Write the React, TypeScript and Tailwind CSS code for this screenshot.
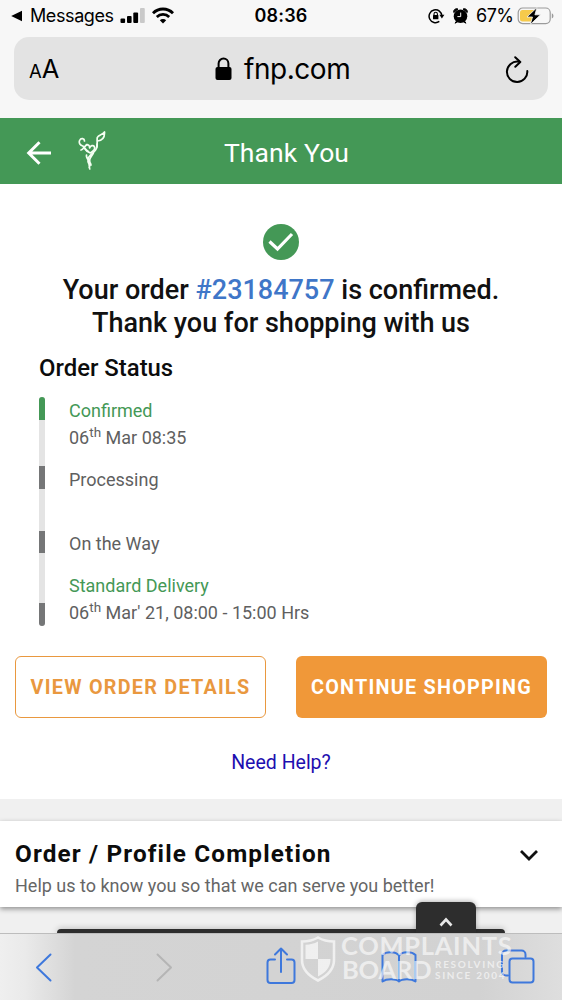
import React from "react";

function StatusBar() {
  return (
    <div className="flex h-[37px] items-center pr-[7px] pb-[6px] pl-[10px] font-['Inter','Liberation_Sans',sans-serif] text-black">
      <div className="flex w-[200px] items-center">
        <svg width="13" height="12" viewBox="0 0 13 12" className="mr-[7px]">
          <path d="M1.2 6 12 .8v10.4z" />
        </svg>
        <span className="w-[85px] text-[18px] leading-[30px] whitespace-nowrap tracking-[-0.4px]">Messages</span>
        <svg width="26" height="16" viewBox="0 0 26 16" className="ml-[5px]">
          <rect x="0.5" y="10.5" width="4.6" height="4.5" rx="1" />
          <rect x="7" y="8" width="4.6" height="7" rx="1" />
          <rect x="13.3" y="4.5" width="4.8" height="10.5" rx="1" />
          <rect x="20" y="0" width="4.8" height="15" rx="1" fill="#c9c9c9" />
        </svg>
        <svg width="22" height="17" viewBox="0 0 22 17" className="ml-[6px] shrink-0" fill="none" stroke="#000" strokeWidth="2.8">
          <path d="M1 6.2a14 14 0 0 1 20 0" />
          <path d="M4.8 10a8.8 8.8 0 0 1 12.4 0" />
          <path d="M11 16.6 7.8 13.2a4.6 4.6 0 0 1 6.4 0z" fill="#000" stroke="none" />
        </svg>
      </div>
      <div className="w-[142px] text-center text-[18px] leading-[30px] font-semibold tracking-[0.2px]">08:36</div>
      <div className="flex w-[203px] items-center justify-end">
        <svg width="17" height="16" viewBox="0 0 17 16" fill="none" stroke="#000" strokeWidth="1.5">
          <path d="M11.3 13.4A6.4 6.4 0 1 1 13.9 8" />
          <path d="M11.4 6.8h5l-2.5 3.6z" fill="#000" stroke="none" />
          <rect x="5" y="7" width="5.4" height="4.3" rx=".5" fill="#000" stroke="none" />
          <path d="M6 7.4V6a1.7 1.7 0 0 1 3.400 0v1.4" strokeWidth="1.1" />
        </svg>
        <svg width="15" height="16" viewBox="0 0 15 16" className="ml-[8px]">
          <circle cx="7.5" cy="8.3" r="6.8" />
          <path d="M.8 4.600A3 3 0 0 1 5 1L.8 4.600zM14.200 4.600A3 3 0 0 0 10 1l4.200 3.600zM2 15.200l2.200-3 1.300 1zM13 15.200l-2.200-3-1.300 1z" stroke="#000" strokeWidth="1" />
          <path d="M7.700 4.600v4H4.400" fill="none" stroke="#f7f7f7" strokeWidth="1" />
        </svg>
        <span className="ml-[8px] w-[39px] text-[18px] leading-[30px] tracking-[-0.5px] whitespace-nowrap">67%</span>
        <svg width="38" height="18" viewBox="0 0 38 18" className="ml-[2px] shrink-0">
          <rect x="1.2" y="1" width="32" height="15.6" rx="4.500" fill="none" stroke="#9b9b9b" strokeWidth="1.2" />
          <path d="M5.500 3H17v11.600H5.500A2.500 2.500 0 0 1 3 12.100V5.500A2.500 2.500 0 0 1 5.500 3z" fill="#f6ca4b" />
          <path d="M34.800 6.200a3 3 0 0 1 0 5.400z" fill="#9b9b9b" />
          <path d="M20 .5 10 10h5.500l-2.200 7.500L23.500 7.800h-5.600z" stroke="#f7f7f7" strokeWidth=".8" />
        </svg>
      </div>
    </div>
  );
}

function AddressBar() {
  return (
    <div className="mx-[14px] flex h-[63px] items-center rounded-[15px] bg-[#e3e3e3] font-['Inter','Liberation_Sans',sans-serif] text-black">
      <div className="flex w-[180px] items-baseline pt-[2px] pl-[15px] leading-[30px]">
        <span className="text-[18.500px]">A</span>
        <span className="text-[25.500px] tracking-[-0.500px]">A</span>
      </div>
      <div className="flex grow items-center pl-[21px]">
        <svg width="17" height="24" viewBox="0 0 17 24">
          <rect x=".5" y="10" width="16" height="13" rx="2" />
          <path d="M3.600 11V6.500a4.900 4.900 0 0 1 9.800 0V11" fill="none" stroke="#000" strokeWidth="2" />
        </svg>
        <span className="ml-[12px] pt-px text-[28px] leading-[36px] tracking-[-0.450px]">fnp.com</span>
      </div>
      <svg width="24" height="28" viewBox="0 0 24 28" className="mt-[2px] mr-[19px]" fill="none" stroke="#000" strokeWidth="2" strokeLinecap="round" strokeLinejoin="round">
        <path d="M13.500 5.700A10.200 10.200 0 1 0 22.300 15" />
        <path d="M10.200 1.200 15.300 6l-5 4.800" />
      </svg>
    </div>
  );
}

function GreenHeader() {
  return (
    <div className="flex h-[66px] items-center bg-[#449856] text-white">
      <div className="flex w-[180px] items-center pl-[26px]">
        <svg width="26" height="26" viewBox="0 0 26 26" className="mt-[3px]" fill="none" stroke="#fff" strokeWidth="3">
          <path d="M25 13H3M13.500 2.200 2.700 13l10.800 10.800" />
        </svg>
        <svg width="28" height="40" viewBox="0 0 28 40" className="ml-[26px]" fill="none" stroke="#f4fff2" strokeWidth="1.700" strokeLinecap="round" strokeLinejoin="round">
          <path d="M6.500 10C6.500 7.500 3 6.500 1.600 9.500c-1 2.500.6 5 3.200 5.500 2 1.500 2.500 4 5 5M3 19c2.500-.5 3.500-4 6-5.500" />
          <path d="M9 14c1.800-.5 2.600 1 2.600 2.800 1-2.300 3.600-3 4.700-1.300 1.200 2-.8 4.500-4 6.500C9.500 21 7.500 19 6.300 17" />
          <path d="M19 16c.5-4-.2-7.500.3-9.500C20.500 3.500 24.500 4 26.500 1c.3 5-2 8.500-7 9" />
          <path d="M19 13c.5 5.500-3 8-6.500 11-3.200 3-3.200 6-1.500 9l.7 5M16 20.500c-1 3.500-3.500 5-4.300 8-.5 3 1.800 4.500-.5 8M8.500 24c-1 4 4 6 4.500 10" />
        </svg>
      </div>
      <h1 className="w-[213px] pt-[3px] text-center text-[26.500px] leading-[34px] font-normal tracking-[0.100px]">Thank You</h1>
    </div>
  );
}

const steps = [
  { title: "Confirmed", day: "06", rest: " Mar 08:35", done: true, size: "h-[69px]" },
  { title: "Processing", done: false, size: "h-[64px]" },
  { title: "On the Way", done: false, size: "h-[42px]" },
];

function When({ day, rest }: { day: string; rest: string }) {
  return (
    <div className="whitespace-pre">
      {day}
      <sup className="top-[-0.550em] text-[13.500px]">th</sup>
      {rest}
    </div>
  );
}

function OrderStatus() {
  return (
    <div className="mt-[12px] flex pl-[39px]">
      <div className="flex h-[229px] w-[6px] flex-col overflow-hidden rounded-[3px] bg-[#e4e4e4]">
        <div className="h-[23px] bg-[#449856]" />
        <div className="mt-[46px] h-[23px] bg-[#757677]" />
        <div className="mt-[42px] h-[22px] bg-[#757677]" />
        <div className="mt-[50px] h-[23px] bg-[#757677]" />
      </div>
      <div className="ml-[24px] text-[18px] leading-[27px] text-[#5f5f5f]">
        {steps.map((s) => (
          <div key={s.title} className={s.size}>
            <div className={s.done ? "text-[#449856]" : ""}>{s.title}</div>
            {s.day && <When day={s.day} rest={s.rest} />}
          </div>
        ))}
        <div className="text-[#449856]">Standard Delivery</div>
        <When day="06" rest=" Mar' 21, 08:00 - 15:00 Hrs" />
      </div>
    </div>
  );
}

function Watermark() {
  return (
    <div className="absolute top-[2px] left-[300px] flex font-['Lato','Open_Sans',sans-serif] font-bold text-white/60">
      <svg width="36" height="46" viewBox="0 0 36 46" className="shrink-0">
        <path d="M18 1.500C23 4.500 28 5.500 34 5.500V24c0 10-7 16-16 20.500C9 40 2 34 2 24V5.500c6 0 11-1 16-4z" fill="none" stroke="#fff" strokeOpacity=".65" strokeWidth="2.600" />
        <path d="M18 5.500V23H5.500V8.700c5-.2 8.500-1 12.500-3.200zM18 23h12.500c0 9-5.500 14-12.500 17.500z" fill="#fff" fillOpacity=".65" />
      </svg>
      <div className="ml-[5px]">
        <div className="h-[22px] text-[25.500px] leading-[19px] tracking-[0.700px]">COMPLAINTS</div>
        <div className="flex">
          <span className="w-[94px] pl-px text-[25.500px] leading-[23px] tracking-[-0.200px]">BOARD</span>
          <span className="pt-px text-[10px] leading-[10.500px] tracking-[1.700px] whitespace-nowrap">
            RESOLVING
            <br />
            SINCE 2004
          </span>
        </div>
      </div>
    </div>
  );
}

function Toolbar() {
  return (
    <div className="relative h-[67px] border-t border-[#bdbdbd] bg-[linear-gradient(to_right,#efefef_0px,#eaeaea_25px,#d4d4d4_75px,#d2d2d2_480px,#dedede_562px)]">
      <svg width="562" height="66" viewBox="0 0 562 66" fill="none" stroke="#3e78dc" strokeWidth="2" strokeLinecap="round" strokeLinejoin="round">
        <path d="M50.500 20.500 37 33.500l13.500 13" />
        <path d="M157.500 20.500 171 33.500l-13.500 13" stroke="#b5b5b5" />
        <path d="M275 25.500h-4.500a3 3 0 0 0-3 3V46a3 3 0 0 0 3 3h21a3 3 0 0 0 3-3V28.500a3 3 0 0 0-3-3H287M281 38V14.500M275 20.500l6-6 6 6" />
        <path d="M399 21.500c-3-4-12.500-4.500-16.500-.5v26.500c4-3 13.500-3 16.500 0 3-3 12.500-3 16.500 0V21c-4-4-13.500-3.500-16.500.5zM399 21.500v26" />
        <rect x="509.500" y="24.500" width="24" height="24" rx="3" />
        <path d="M508 41.500h-2a4 4 0 0 1-4-4v-17a4 4 0 0 1 4-4h15.500a4 4 0 0 1 4 4v2.500" />
      </svg>
      <Watermark />
    </div>
  );
}

export default function App() {
  return (
    <div className="flex h-[1000px] w-[562px] flex-col overflow-hidden bg-white font-['Roboto','Liberation_Sans',sans-serif]">
      <div className="h-[118px] shrink-0 bg-[#f7f7f7]">
        <StatusBar />
        <AddressBar />
      </div>
      <GreenHeader />

      <main className="h-[615px] shrink-0 pt-[40px]">
        <svg width="36" height="36" viewBox="0 0 36 36" className="mx-auto">
          <circle cx="18" cy="18" r="18" fill="#449856" />
          <path d="m6.500 17.500 8 7.500L29 10" fill="none" stroke="#fff" strokeWidth="3.200" />
        </svg>
        <h2 className="mt-[14px] text-center text-[27px] leading-[33px] font-medium text-[#111]">
          Your order <span className="text-[#3f76c8]">#23184757</span> is confirmed.
          <br />
          Thank you for shopping with us
        </h2>
        <h3 className="mt-[12px] pl-[39px] text-[23.900px] leading-[33px] font-medium text-[#0c0c0c]">Order Status</h3>
        <OrderStatus />
        <div className="mt-[30px] flex gap-[30px] px-[15px] text-[19.800px] font-bold tracking-[1.250px] whitespace-nowrap">
          <button className="h-[62px] w-[251px] rounded-[6px] border-[1.500px] border-[#e9983f] pt-[2px] text-[#e9983f]">VIEW ORDER DETAILS</button>
          <button className="h-[62px] w-[251px] rounded-[6px] bg-[#f09839] pt-[2px] text-white">CONTINUE SHOPPING</button>
        </div>
        <a className="mt-[30px] block text-center text-[19.500px] leading-[30px] text-[#1d0fb0]">Need Help?</a>
      </main>

      <div className="flex h-[134px] shrink-0 flex-col bg-[#f0f0f0]">
        <section className="mt-[22px] flex h-[86px] bg-white pl-[15px] shadow-[0_2px_5px_rgba(0,0,0,0.4)]">
          <div className="w-[500px] pt-[17px]">
            <h3 className="text-[24.300px] leading-[32px] font-bold tracking-[1.150px] text-[#0c0c0c]">Order / Profile Completion</h3>
            <p className="text-[18px] leading-[32px] text-[#666]">Help us to know you so that we can serve you better!</p>
          </div>
          <svg width="20" height="14" viewBox="0 0 20 14" className="mt-[27px] ml-[4px]" fill="none" stroke="#111" strokeWidth="2.800">
            <path d="m2 3 8 8 8-8" />
          </svg>
        </section>
        <div className="relative flex grow items-end">
          <div className="ml-[57px] h-[4px] w-[448px] rounded-t-[5px] bg-[#2d2d2d] shadow-[0_0_6px_rgba(0,0,0,0.3)]" />
          <div className="absolute top-[-5px] left-[416px] flex h-[31px] w-[60px] justify-center rounded-t-[6px] bg-[#2d2d2d] pt-[15px] shadow-[0_-1px_5px_rgba(0,0,0,0.3)]">
            <svg width="14" height="10" viewBox="0 0 14 10" fill="none" stroke="#e8e8e8" strokeWidth="2.600">
              <path d="m1.500 8.500 5.500-6 5.500 6" />
            </svg>
          </div>
        </div>
      </div>
      <Toolbar />
    </div>
  );
}
